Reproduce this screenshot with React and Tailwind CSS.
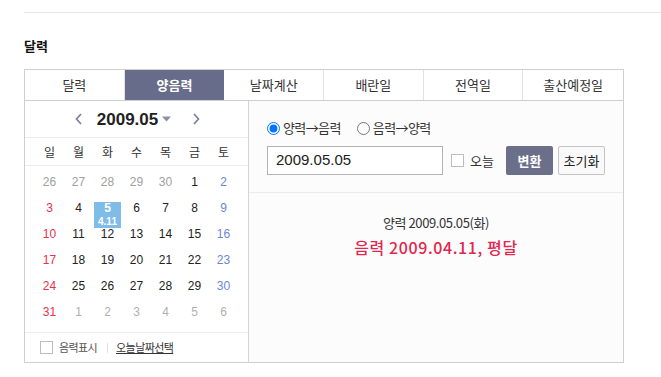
import React from "react";

const KR = { fontFamily: '"Noto Sans CJK KR", "Noto Sans", sans-serif' };
const NUM = { fontFamily: '"Liberation Sans", Arial, sans-serif' };

const TABS = ["달력", "양음력", "날짜계산", "배란일", "전역일", "출산예정일"];
const WEEK = ["일", "월", "화", "수", "목", "금", "토"];

// [day, kind] kind: p = prev month, n = next month, c = current
const DAYS = [
  [26, "p"], [27, "p"], [28, "p"], [29, "p"], [30, "p"], [1, "c"], [2, "c"],
  [3, "c"], [4, "c"], [5, "c"], [6, "c"], [7, "c"], [8, "c"], [9, "c"],
  [10, "c"], [11, "c"], [12, "c"], [13, "c"], [14, "c"], [15, "c"], [16, "c"],
  [17, "c"], [18, "c"], [19, "c"], [20, "c"], [21, "c"], [22, "c"], [23, "c"],
  [24, "c"], [25, "c"], [26, "c"], [27, "c"], [28, "c"], [29, "c"], [30, "c"],
  [31, "c"], [1, "n"], [2, "n"], [3, "n"], [4, "n"], [5, "n"], [6, "n"],
];

function dayColor(kind, col) {
  if (kind === "p") return "text-[#a0a0a0]";
  if (kind === "n") return "text-[#b0b0b0]";
  if (col === 0) return "text-[#e8304a]";
  if (col === 6) return "text-[#6a86d8]";
  return "text-[#222]";
}

function Chevron({ dir }) {
  return (
    <svg width="7" height="12" viewBox="0 0 7 12" fill="none">
      <polyline
        points={dir === "left" ? "6,1 1.5,6 6,11" : "1,1 5.5,6 1,11"}
        stroke="#7b809a"
        strokeWidth="1.7"
      />
    </svg>
  );
}

function MiniCalendar() {
  return (
    <div className="w-[224px] border-r border-[#d5d5d5] flex flex-col">
      {/* month header */}
      <div className="h-[37px] border-b border-[#ececec] flex items-center justify-center">
        <div className="flex items-center pl-[2px]">
          <Chevron dir="left" />
          <span style={NUM} className="ml-[15px] text-[17px] font-bold text-[#222] leading-none">
            2009.05
          </span>
          <svg className="ml-[4px]" width="9" height="6" viewBox="0 0 9 6">
            <polygon points="0,0.5 9,0.5 4.5,5.5" fill="#8a8fa8" />
          </svg>
          <span className="ml-[22px]">
            <Chevron dir="right" />
          </span>
        </div>
      </div>

      {/* weekdays */}
      <div className="h-[28px] border-b border-[#ececec] px-[10px] grid grid-cols-7 items-center">
        {WEEK.map((w) => (
          <span key={w} style={KR} className="text-center text-[12px] text-[#333] leading-none">
            {w}
          </span>
        ))}
      </div>

      {/* dates */}
      <div className="pt-[10px] px-[10px] grid grid-cols-7 border-b border-[#ececec]">
        {DAYS.map(([d, kind], i) => {
          const sel = kind === "c" && d === 5;
          if (sel) {
            return (
              <div key={i} className="h-[26px] flex justify-center">
                <div className="w-[27px] h-[26px] bg-[#7fbde8] flex flex-col items-center">
                  <span style={NUM} className="text-[12px] font-bold text-white leading-[12px]">5</span>
                  <span style={NUM} className="mt-[3px] text-[10px] font-bold text-white leading-[10px]">4.11</span>
                </div>
              </div>
            );
          }
          return (
            <div key={i} className="h-[26px] flex justify-center">
              <span style={NUM} className={`text-[12px] leading-[12px] ${dayColor(kind, i % 7)}`}>
                {d}
              </span>
            </div>
          );
        })}
      </div>

      {/* footer */}
      <div className="h-[29px] flex items-center pl-[15px]">
        <span className="w-[13px] h-[13px] border border-[#bdbdbd] bg-white" />
        <span style={KR} className="ml-[6px] text-[11px] text-[#555] tracking-[-0.6px]">음력표시</span>
        <span className="ml-[10px] w-px h-[10px] bg-[#e0e0e0]" />
        <span style={KR} className="ml-[8px] text-[11px] text-[#333] underline tracking-[-0.6px]">
          오늘날짜선택
        </span>
      </div>
    </div>
  );
}

function Converter() {
  return (
    <div className="flex-1 bg-[#fcfcfd] flex flex-col">
      <div className="h-[92px] border-b border-[#ececec] pl-[18px] pt-[20px]">
        <div className="flex items-center h-[14px]">
          <label className="flex items-center">
            <input type="radio" name="mode" defaultChecked className="m-0 w-[13px] h-[13px]" />
            <span style={KR} className="ml-[3px] text-[13px] text-[#333] tracking-[-0.6px]">양력→음력</span>
          </label>
          <label className="flex items-center ml-[16px]">
            <input type="radio" name="mode" className="m-0 w-[13px] h-[13px]" />
            <span style={KR} className="ml-[3px] text-[13px] text-[#333] tracking-[-0.6px]">음력→양력</span>
          </label>
        </div>
        <div className="mt-[11px] flex items-center">
          <div className="w-[176px] h-[29px] border border-[#b3b3b3] bg-white flex items-center pl-[8px]">
            <span style={NUM} className="text-[15px] text-[#222]">2009.05.05</span>
          </div>
          <span className="ml-[8px] w-[13px] h-[13px] border border-[#bdbdbd] bg-white" />
          <span style={KR} className="ml-[6px] text-[13px] text-[#333]">오늘</span>
          <button style={KR} className="ml-[12px] w-[47px] h-[29px] rounded-[2px] bg-[#6b6f8a] text-white text-[13px] font-bold">
            변환
          </button>
          <button style={KR} className="ml-[5px] w-[47px] h-[29px] rounded-[2px] border border-[#c4c4c4] bg-[#f9f9f9] text-[#222] text-[13px]">
            초기화
          </button>
        </div>
      </div>
      <div className="flex flex-col items-center pt-[22px]">
        <p style={KR} className="text-[13px] text-[#333] leading-[16px] tracking-[-0.4px]">
          양력 2009.05.05(화)
        </p>
        <p style={KR} className="mt-[6px] text-[16px] font-medium text-[#e2264d] leading-[20px] tracking-[0.6px]">
          음력 2009.04.11, 평달
        </p>
      </div>
    </div>
  );
}

export default function App() {
  return (
    <div className="w-[661px] h-[377px] bg-white pt-[12px] pl-[24px] overflow-hidden">
      <div className="border-t border-[#e6e6e6]" />
      <h2 style={KR} className="mt-[24px] text-[13px] font-bold text-[#111] leading-[18px]">
        달력
      </h2>
      <div className="mt-[14px] w-[600px] border border-[#cfcfcf]">
        <div className="flex h-[31px] border-b border-[#cfcfcf]">
          {TABS.map((t, i) => (
            <div
              key={t}
              style={KR}
              className={
                i === 1
                  ? "w-[100px] flex items-center justify-center bg-[#666c89] text-white text-[13px] font-bold"
                  : "w-[100px] flex items-center justify-center text-[13px] text-[#333] border-r border-[#e2e2e2] last:border-r-0"
              }
            >
              {t}
            </div>
          ))}
        </div>
        <div className="flex">
          <MiniCalendar />
          <Converter />
        </div>
      </div>
    </div>
  );
}
